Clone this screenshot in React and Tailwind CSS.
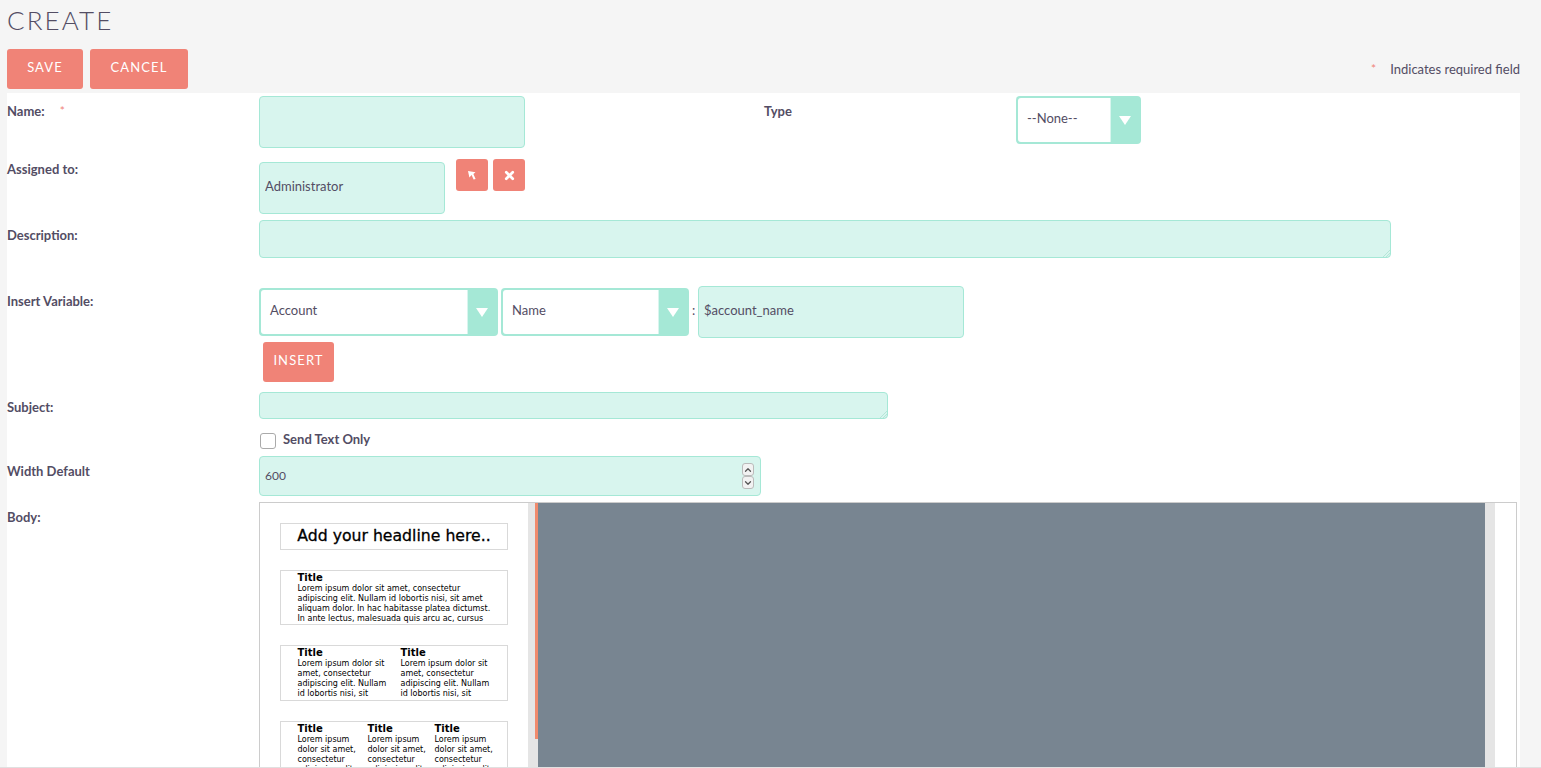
import { ChevronDown, ChevronUp, X } from "lucide-react";

const inputCls =
  "block bg-[#d8f5ee] border border-[#a5e8d6] rounded-[4px] text-[13px] text-[#534d64] outline-none";

function Label({ children, className = "pt-[5px]" }) {
  return (
    <div className={`w-[252px] shrink-0 text-[13px] leading-5 font-bold text-[#534d64] ${className}`}>
      {children}
    </div>
  );
}

function Select({ value, className }) {
  return (
    <div className={`flex h-12 bg-[#a5e8d6] rounded-[4px] p-[2px] ${className}`}>
      <div className="flex-1 flex items-center bg-white border-r border-[#d8f5ee] rounded-l-[3px] text-[13px] text-[#534d64] pl-[9px] pb-[2px]">
        {value}
      </div>
      <div className="w-[28px] flex items-center justify-center">
        <svg width="12" height="9" viewBox="0 0 12 9">
          <polygon points="0,0 12,0 6,9" fill="#fff" />
        </svg>
      </div>
    </div>
  );
}

function Btn({ children, className }) {
  return (
    <button className={`h-10 pb-[3px] bg-[#f08377] rounded-[3px] text-white text-[13px] tracking-[1.1px] uppercase ${className}`}>
      {children}
    </button>
  );
}

function Grip() {
  return (
    <svg className="absolute right-[1px] bottom-[1px]" width="8" height="8" viewBox="0 0 8 8">
      <path d="M8 1 L1 8 M8 4 L4 8 M8 6.5 L6.5 8" stroke="#b5e6d8" strokeWidth="1" />
    </svg>
  );
}

function Block({ cols, className }) {
  return (
    <div className={`mt-5 w-[228px] border border-[#d9d9d9] flex overflow-hidden font-['DejaVu_Sans',sans-serif] text-black ${className}`}>
      {cols.map((c, i) => (
        <div key={i} className={`shrink-0 ${c.w}`}>
          <div className="text-[10px] leading-[10px] font-bold">Title</div>
          <div className="text-[8px] leading-[10px] mt-[1px]">
            {c.lines.map((l, j) => (
              <div key={j} className="whitespace-nowrap">{l}</div>
            ))}
          </div>
        </div>
      ))}
    </div>
  );
}

const twoCol = ["Lorem ipsum dolor sit", "amet, consectetur", "adipiscing elit. Nullam", "id lobortis nisi, sit"];
const threeCol = ["Lorem ipsum", "dolor sit amet,", "consectetur", "adipiscing elit."];

export default function App() {
  return (
    <div className="h-[768px] overflow-hidden bg-[#f5f5f5] border-b border-[#e0e0e0] font-['Lato',sans-serif] text-[#534d64]">
      <h1 className="pl-[7px] pt-[5px] h-[49px] text-[26px] leading-[30px] font-light tracking-[2.1px]">CREATE</h1>

      <div className="flex items-center justify-between pl-[7px] pr-[21px]">
        <div className="flex gap-[7px]">
          <Btn className="w-[76px]">Save</Btn>
          <Btn className="w-[98px]">Cancel</Btn>
        </div>
        <div className="flex text-[13px] leading-5">
          <span className="text-[#f08377] text-xs mr-[14px] pt-[2px]">*</span>
          <span>Indicates required field</span>
        </div>
      </div>

      <div className="ml-[7px] mr-[21px] mt-1 bg-white pt-[3px] h-[700px]">
        <div className="flex">
          <div className="flex w-[757px] shrink-0">
            <Label>
              Name:<span className="relative top-[2px] text-[#f08377] text-xs ml-[15px] align-top font-normal">*</span>
            </Label>
            <input className={`${inputCls} w-[266px] h-[52px]`} />
          </div>
          <Label>Type</Label>
          <Select value="--None--" className="w-[125px]" />
        </div>

        <div className="flex mt-[11px]">
          <Label className="pt-0">Assigned to:</Label>
          <input className={`${inputCls} w-[186px] h-[52px] mt-[3px] px-[5px] pb-[5px]`} defaultValue="Administrator" />
          <button className="ml-[11px] w-8 h-8 bg-[#f08377] rounded-[3px] flex items-center justify-center">
            <svg width="10" height="10" viewBox="0 0 10 10">
              <path d="M1 1 L8.5 2.2 L6.4 4 L8.6 9 L6.6 9.6 L4.6 5 L2.4 7.6 Z" fill="#fff" />
            </svg>
          </button>
          <button className="ml-[5px] w-8 h-8 bg-[#f08377] rounded-[3px] flex items-center justify-center text-white">
            <X size={13} strokeWidth={5} />
          </button>
        </div>

        <div className="flex mt-[6px]">
          <Label>Description:</Label>
          <div className="relative w-[1132px] h-[38px]">
            <textarea className={`${inputCls} w-full h-full resize-none`} />
            <Grip />
          </div>
        </div>

        <div className="flex mt-7">
          <Label>Insert Variable:</Label>
          <div>
            <div className="flex">
              <Select value="Account" className="w-[239px] mt-[2px]" />
              <Select value="Name" className="w-[188px] ml-[3px] mt-[2px]" />
              <span className="w-[9px] text-center text-[13px] leading-[48px]">:</span>
              <input className={`${inputCls} w-[266px] h-[52px] px-[5px] pb-[5px]`} defaultValue="$account_name" />
            </div>
            <Btn className="block w-[71px] mt-1 ml-1">Insert</Btn>
          </div>
        </div>

        <div className="flex mt-[10px]">
          <Label>Subject:</Label>
          <div className="relative w-[629px] h-[27px]">
            <textarea className={`${inputCls} w-full h-full resize-none`} />
            <Grip />
          </div>
        </div>

        <div className="flex items-center ml-[253px] mt-[14px] h-4">
          <input type="checkbox" className="w-4 h-4 appearance-none bg-white border border-[#aaa] rounded-[3px]" />
          <span className="ml-[7px] mb-[2px] text-[13px] font-bold">Send Text Only</span>
        </div>

        <div className="flex mt-[7px]">
          <Label>Width Default</Label>
          <div className={`${inputCls} relative w-[502px] h-10 flex items-center px-[5px] !text-xs`}>
            600
            <div className="absolute right-[6px] top-[6px] flex flex-col">
              <span className="w-3 h-[13px] bg-[#f2f2f2] border border-[#bbb] rounded-[3px] flex items-center justify-center text-[#555]">
                <ChevronUp size={10} strokeWidth={3} />
              </span>
              <span className="w-3 h-[13px] bg-[#f2f2f2] border border-[#bbb] rounded-[3px] flex items-center justify-center text-[#555]">
                <ChevronDown size={10} strokeWidth={3} />
              </span>
            </div>
          </div>
        </div>

        <div className="flex mt-[6px]">
          <Label>Body:</Label>
          <div className="flex w-[1258px] h-[300px] border border-[#ccc] bg-white">
            <div className="w-[268px] shrink-0 pl-5 pt-5">
              <div className="w-[228px] h-[27px] border border-[#d9d9d9] font-['DejaVu_Sans',sans-serif] text-[15.7px] leading-[24px] font-normal [-webkit-text-stroke:0.3px_black] text-black text-center">
                Add your headline here..
              </div>
              <Block
                className="h-[55px] pl-[16.5px] pt-[2px]"
                cols={[{
                  w: "w-[200px]",
                  lines: [
                    "Lorem ipsum dolor sit amet, consectetur",
                    "adipiscing elit. Nullam id lobortis nisi, sit amet",
                    "aliquam dolor. In hac habitasse platea dictumst.",
                    "In ante lectus, malesuada quis arcu ac, cursus",
                  ],
                }]}
              />
              <Block
                className="h-[56px] pl-[16.5px] pt-[2px]"
                cols={[
                  { w: "w-[103px]", lines: twoCol },
                  { w: "w-[100px]", lines: twoCol },
                ]}
              />
              <Block
                className="h-[62px] pl-[16.5px] pt-[2px]"
                cols={[
                  { w: "w-[70px]", lines: threeCol },
                  { w: "w-[67px]", lines: threeCol },
                  { w: "w-[60px]", lines: threeCol },
                ]}
              />
            </div>
            <div className="relative w-[10px] shrink-0 bg-[#e5e5e5]">
              <div className="absolute right-0 top-0 w-[3px] h-[236px] bg-[#f08a6c]" />
            </div>
            <div className="w-[947px] shrink-0 bg-[#788591]" />
            <div className="w-[10px] shrink-0 bg-[#e5e5e5]" />
          </div>
        </div>
      </div>
    </div>
  );
}
